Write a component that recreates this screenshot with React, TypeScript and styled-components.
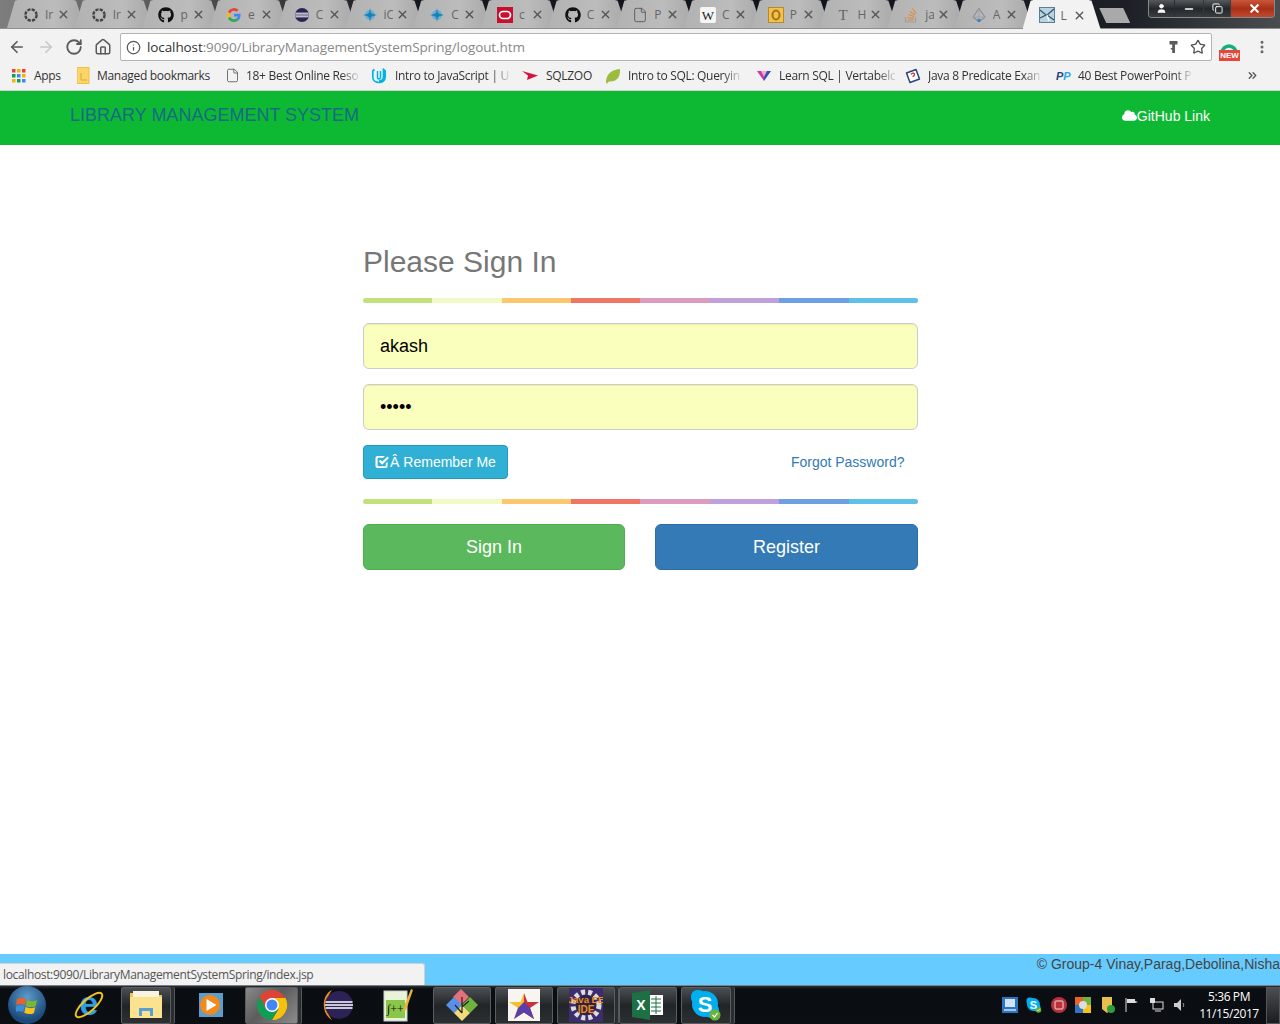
import React from "react";
import styled, { createGlobalStyle } from "styled-components";
import { ArrowLeft, ArrowRight, RotateCw, Home, Info, Star, X, Minus, Copy, User, ChevronsRight, MoreVertical, File } from "lucide-react";
import { FaGithub, FaCloud } from "react-icons/fa";

const Global = createGlobalStyle`
  html, body { margin: 0; padding: 0; background: #fff; }
  body { font-family: "Liberation Sans", Arial, sans-serif; overflow: hidden; }
  * { box-sizing: border-box; }
`;

const Page = styled.div`
  width: 1280px;
  height: 1024px;
  display: flex;
  flex-direction: column;
  position: relative;
  overflow: hidden;
`;

/* ---------- browser chrome ---------- */
const TabStrip = styled.div`
  height: 29px;
  flex: none;
  display: flex;
  justify-content: space-between;
  padding-left: 7px;
  background: linear-gradient(90deg, #7d7d7d 0, #5a5a5a 12%, #14181e 32%, #10141a 65%, #1c2026 88%, #4a4d50 100%);
  border-bottom: 1px solid #8f8f8f;
`;
const Tabs = styled.div`
  display: flex;
  align-items: flex-end;
`;
const Tab = styled.div<{ $active?: boolean }>`
  width: 78px;
  height: 28px;
  margin-right: -10.3px;
  padding: 1px 0 0 16px;
  display: flex;
  align-items: center;
  clip-path: polygon(0 100%, 8px 3%, 11px 0, 66px 0, 69px 3%, 78px 100%);
  background: ${(p) => (p.$active ? "#f2f2f2" : "linear-gradient(90deg,#b2b2b2,#bcbcbc 60%,#a8a8a8)")};
  position: relative;
  z-index: ${(p) => (p.$active ? 2 : 1)};
  ${(p) => (p.$active ? "height: 29px; margin-bottom: -1px;" : "")}
`;
const TabLabel = styled.span`
  font-family: "Open Sans", sans-serif;
  font-size: 12px;
  color: #666;
  width: 9px;
  margin-left: 6px;
  overflow: hidden;
  white-space: nowrap;
  flex: none;
`;
const TabClose = styled(X)`
  margin-left: 3px;
  flex: none;
  color: #555;
`;
const NewTab = styled.div`
  width: 31px;
  height: 15px;
  align-self: flex-start;
  margin: 8px 0 0 9px;
  background: #a9a9a9;
  clip-path: polygon(0 0, 24px 0, 31px 100%, 7px 100%);
`;
const WinControls = styled.div`
  width: 127px;
  height: 18px;
  margin-right: 5px;
  display: flex;
  gap: 1px;
  border: 1px solid #888;
  border-top: none;
  border-radius: 0 0 4px 4px;
  overflow: hidden;
`;
const WinButton = styled.div<{ $w: number; $bg?: string }>`
  width: ${(p) => p.$w}px;
  flex: none;
  display: flex;
  align-items: center;
  justify-content: center;
  color: #fff;
  background: ${(p) => p.$bg || "linear-gradient(180deg,#55585c,#24272b 50%,#3a3d40)"};
`;

const Toolbar = styled.div`
  height: 33px;
  flex: none;
  display: flex;
  align-items: center;
  background: #f2f2f2;
  padding: 3px 0 0 8px;
`;
const NavIcons = styled.div`
  display: flex;
  align-items: center;
  gap: 10.5px;
  width: 112px;
  flex: none;
  color: #5a5a5a;
`;
const Omnibox = styled.div`
  width: 1092px;
  height: 28px;
  flex: none;
  background: #fff;
  border: 1px solid #b4b4b4;
  border-radius: 2px;
  display: flex;
  align-items: center;
  padding: 0 5px;
  color: #555;
`;
const Url = styled.div`
  flex: 1;
  margin-left: 6px;
  font-family: "Open Sans", sans-serif;
  font-size: 13.5px;
  color: #888;
  white-space: nowrap;
  letter-spacing: -0.1px;
  b { font-weight: 400; color: #333; }
`;
const ExtWrap = styled.div`
  width: 62px;
  flex: none;
  margin-left: 6px;
  position: relative;
  height: 28px;
  display: flex;
  align-items: center;
  justify-content: space-between;
  padding-right: 10px;
`;
const NewBadge = styled.span`
  position: absolute;
  left: 1px;
  top: 17px;
  background: #e8453c;
  color: #fff;
  font-size: 8px;
  font-weight: 700;
  width: 21px;
  height: 11px;
  line-height: 11px;
  text-align: center;
`;

const Bookmarks = styled.div`
  height: 29px;
  flex: none;
  display: flex;
  align-items: center;
  background: #f2f2f2;
  border-bottom: 1px solid #d2d2d2;
  padding: 0 0 1px 11px;
`;
const Bookmark = styled.div<{ $w: number }>`
  width: ${(p) => p.$w}px;
  flex: none;
  display: flex;
  align-items: center;
`;
const BookmarkIcon = styled.span<{ $gap: number }>`
  display: flex;
  width: 16px;
  height: 16px;
  align-items: center;
  justify-content: center;
  flex: none;
  margin-right: ${(p) => p.$gap}px;
`;
const BookmarkText = styled.span<{ $fade?: boolean }>`
  font-family: "Open Sans", sans-serif;
  font-size: 12px;
  letter-spacing: -0.3px;
  color: #333;
  white-space: nowrap;
  ${(p) => (p.$fade ? "mask-image: linear-gradient(90deg,#000 85%,rgba(0,0,0,.15));" : "")}
`;
const Overflow = styled(ChevronsRight)`
  margin-left: auto;
  margin-right: 21px;
  color: #555;
`;

/* ---------- page ---------- */
const NavBar = styled.nav`
  height: 54px;
  flex: none;
  background: #0db933;
  display: flex;
  align-items: center;
  justify-content: space-between;
  padding: 0 70px 5px;
`;
const Brand = styled.a`
  font-size: 18px;
  color: #176a85;
  white-space: nowrap;
`;
const GitLink = styled.a`
  font-size: 14px;
  color: #fff;
  display: flex;
  align-items: center;
`;
const Main = styled.main`
  flex: 1;
  background: #fff;
  display: flex;
  justify-content: center;
  padding-top: 96px;
`;
const Form = styled.form`
  width: 555px;
  margin-left: 1px;
`;
const Heading = styled.h2`
  margin: 0;
  font-size: 30px;
  line-height: 41px;
  font-weight: 400;
  color: #777;
`;
const Rainbow = styled.div<{ $mt: number; $mb: number }>`
  height: 5px;
  margin: ${(p) => p.$mt}px 0 ${(p) => p.$mb}px;
  border-radius: 5px;
  background: linear-gradient(
    90deg,
    #c2e07c 0 12.5%, #f1f9c4 12.5% 25%, #fdc86d 25% 37.5%, #ef7664 37.5% 50%,
    #dc9cc0 50% 62.5%, #bf9fdc 62.5% 75%, #6e9fe0 75% 87.5%, #5fc1e8 87.5% 100%
  );
`;
const Field = styled.input`
  display: block;
  width: 100%;
  height: 46px;
  margin-bottom: 15px;
  padding: 0 16px;
  font-family: "Liberation Sans", Arial, sans-serif;
  font-size: 18px;
  color: #000;
  background: #fbffbd;
  border: 1px solid #ccc;
  border-radius: 6px;
  box-shadow: inset 0 1px 1px rgba(0, 0, 0, 0.075);
  outline: none;
`;
const RememberRow = styled.div`
  display: flex;
  align-items: center;
  justify-content: space-between;
  padding-right: 13.5px;
`;
const Remember = styled.button`
  width: 145px;
  height: 34px;
  padding: 0;
  display: flex;
  align-items: center;
  justify-content: center;
  font-family: "Liberation Sans", Arial, sans-serif;
  font-size: 14px;
  color: #fff;
  background: #31b0d5;
  border: 1px solid #269abc;
  border-radius: 4px;
`;
const Forgot = styled.a`
  font-size: 14px;
  color: #337ab7;
`;
const Actions = styled.div`
  display: grid;
  grid-template-columns: 262px 263px;
  column-gap: 30px;
`;
const Action = styled.button<{ $bg: string; $bd: string }>`
  height: 46px;
  font-family: "Liberation Sans", Arial, sans-serif;
  font-size: 18px;
  color: #fff;
  background: ${(p) => p.$bg};
  border: 1px solid ${(p) => p.$bd};
  border-radius: 6px;
`;

const Footer = styled.footer`
  height: 31px;
  flex: none;
  background: #66ccff;
  font-size: 14px;
  line-height: 20px;
  color: #444;
  text-align: right;
  white-space: nowrap;
`;
const StatusBubble = styled.div`
  position: absolute;
  left: 0;
  top: 963px;
  width: 425px;
  height: 22px;
  background: #f2f2f2;
  border: 1px solid #d0d0d0;
  border-left: none;
  border-bottom: none;
  border-radius: 0 3px 0 0;
  padding-left: 3px;
  font-family: "Open Sans", sans-serif;
  font-size: 12px;
  letter-spacing: -0.35px;
  line-height: 21px;
  color: #555;
`;

/* ---------- taskbar ---------- */
const Taskbar = styled.div`
  height: 39px;
  flex: none;
  display: flex;
  align-items: center;
  padding-left: 8px;
  color: #fff;
  background: linear-gradient(180deg, #2b3036 0, #0a0d11 8%, #0b0e12 100%);
  border-top: 1px solid #7a8088;
`;
const Orb = styled.div`
  width: 38px;
  height: 38px;
  flex: none;
  border-radius: 50%;
  background: radial-gradient(circle at 50% 30%, #5d9ccb, #1c4a78 70%);
  display: flex;
  align-items: center;
  justify-content: center;
`;
const TaskItem = styled.div<{ $w: number; $ml: number; $boxed?: boolean; $light?: boolean; $stack?: boolean }>`
  width: ${(p) => p.$w}px;
  height: 37px;
  margin-left: ${(p) => p.$ml}px;
  flex: none;
  display: flex;
  align-items: center;
  justify-content: center;
  border-radius: 2px;
  ${(p) => (p.$boxed ? "border: 1px solid #5a5d60;" : "")}
  ${(p) => (p.$stack ? "box-shadow: 3px 0 0 #2b2e31, 4px 0 0 #55585b;" : "")}
  background: ${(p) =>
    p.$light
      ? "linear-gradient(135deg,#8a8a8a,#5c5c5c 45%,#8c8c8c)"
      : p.$boxed
      ? "linear-gradient(180deg,#4b4e52,#222528 50%,#2d3033)"
      : "transparent"};
`;
const Tray = styled.div`
  margin-left: auto;
  display: flex;
  align-items: center;
  gap: 8.5px;
`;
const Clock = styled.div`
  width: 66px;
  margin-left: 0.5px;
  font-family: "Open Sans", sans-serif;
  font-size: 12px;
  line-height: 17px;
  letter-spacing: -0.4px;
  text-align: center;
  color: #fff;
`;
const ShowDesktop = styled.div`
  width: 14px;
  height: 37px;
  margin-left: -4.5px;
  border: 1px solid #555;
  background: linear-gradient(180deg, #4b4e52, #1a1c1f);
`;

/* ---------- drawn icons ---------- */
const Ring = () => (
  <svg width="16" height="16" viewBox="0 0 16 16">
    <circle cx="8" cy="8" r="5.6" fill="none" stroke="#444" strokeWidth="2.4" strokeDasharray="3.2 1.2" />
  </svg>
);
const GoogleG = () => (
  <svg width="16" height="16" viewBox="0 0 16 16">
    <path d="M14.5 8.2c0-.5 0-1-.1-1.4H8v2.7h3.7a3.2 3.2 0 0 1-1.4 2.1l2.2 1.7c1.3-1.2 2-3 2-5.1z" fill="#4285f4" />
    <path d="M8 15c1.9 0 3.4-.6 4.5-1.7l-2.2-1.7c-.6.4-1.4.7-2.3.7-1.8 0-3.3-1.2-3.8-2.8L1.9 11.2A7 7 0 0 0 8 15z" fill="#34a853" />
    <path d="M4.2 9.5a4 4 0 0 1 0-2.9L1.9 4.8a7 7 0 0 0 0 6.4z" fill="#fbbc05" />
    <path d="M8 3.8c1 0 1.9.4 2.6 1l2-2A7 7 0 0 0 1.9 4.8l2.3 1.8C4.7 5 6.2 3.8 8 3.8z" fill="#ea4335" />
  </svg>
);
const EclipseIcon = ({ s = 16 }: { s?: number }) => (
  <svg width={s} height={s} viewBox="0 0 16 16">
    <circle cx="8" cy="8" r="7" fill="#2c2255" />
    <path d="M1.5 6.2h13M1.2 8h13.6M1.5 9.8h13" stroke="#fff" strokeWidth="1" />
  </svg>
);
const Compass = () => (
  <svg width="16" height="16" viewBox="0 0 16 16">
    <circle cx="8" cy="8" r="5" fill="#5fb0d6" />
    <circle cx="8" cy="8" r="2.2" fill="#1a6f9e" />
    <path d="M8 1l1 5.5L15 8l-6 1.5L8 15 7 9.5 1 8l6-1.5z" fill="#1f7fb0" />
  </svg>
);
const OracleIcon = () => (
  <svg width="16" height="16" viewBox="0 0 16 16">
    <rect width="16" height="16" fill="#c8102e" />
    <rect x="2.5" y="4.5" width="11" height="7" rx="3.5" fill="none" stroke="#fff" strokeWidth="1.7" />
  </svg>
);
const WikiIcon = () => (
  <svg width="16" height="16" viewBox="0 0 16 16">
    <rect width="16" height="16" rx="2" fill="#f5f5f5" />
    <text x="8" y="12.5" textAnchor="middle" fontFamily="Liberation Serif, serif" fontSize="13" fill="#222">W</text>
  </svg>
);
const OIcon = () => (
  <svg width="16" height="16" viewBox="0 0 16 16">
    <rect x=".5" y=".5" width="15" height="15" fill="#f0c14b" stroke="#b78a2a" />
    <ellipse cx="8" cy="8" rx="3.5" ry="4.5" fill="none" stroke="#a8701a" strokeWidth="2" />
  </svg>
);
const TIcon = () => (
  <svg width="16" height="16" viewBox="0 0 16 16">
    <text x="8" y="13" textAnchor="middle" fontFamily="Liberation Serif, serif" fontSize="15" fill="#666">T</text>
  </svg>
);
const StackIcon = () => (
  <svg width="16" height="16" viewBox="0 0 16 16" fill="none">
    <path d="M2.5 10v5h10v-5" stroke="#a69f90" strokeWidth="1.2" />
    <path d="M4.5 13h6M4.7 10.500l6 .8M5.500 7.500l5.600 2M7 4.500l5 3.200M9.500 1.500l3.500 5" stroke="#e08a3a" strokeWidth="1.2" />
  </svg>
);
const NetIcon = () => (
  <svg width="16" height="16" viewBox="0 0 16 16" fill="none">
    <path d="M8 1.5L14 10 8 14.500 2 10z" stroke="#8b8f99" strokeWidth="1.2" />
    <path d="M8 1.5v13M2 10h12" stroke="#9aa0aa" strokeWidth=".8" />
    <circle cx="8" cy="13.5" r="1.8" fill="#3d86c6" />
  </svg>
);
const SpringIcon = () => (
  <svg width="16" height="16" viewBox="0 0 16 16">
    <rect x=".5" y=".5" width="15" height="15" fill="#b9d3e0" stroke="#5b7f93" />
    <path d="M1 3l6 5-6 3M15 2L8 8l7 5" fill="none" stroke="#33566b" strokeWidth="1.3" />
    <path d="M8 8l2 6" stroke="#fff" strokeWidth="1.3" />
  </svg>
);
const AppsGrid = () => (
  <svg width="14" height="14" viewBox="0 0 14 14">
    {["#e94235", "#f4b400", "#e94235", "#0f9d58", "#4285f4", "#f4b400", "#f4b400", "#0f9d58", "#4285f4"].map((c, i) => (
      <rect key={i} x={(i % 3) * 5} y={Math.floor(i / 3) * 5} width="3.5" height="3.5" fill={c} />
    ))}
  </svg>
);
const FolderIcon = () => (
  <svg width="13" height="17" viewBox="0 0 13 17">
    <rect width="12" height="16" y=".5" fill="#fbd666" stroke="#edc04d" />
    <path d="M4 6v7h6" fill="none" stroke="#d9a93a" />
  </svg>
);
const UdacityIcon = () => (
  <svg width="16" height="16" viewBox="0 0 16 16" fill="none">
    <path d="M3.5 1.5L1.8 3v6c0 3.500 3 5.500 6.200 5.500S14.200 12.500 14.200 9V3l-1.700-1.500V9c0 3-2 4-4.500 4" stroke="#02b3e4" strokeWidth="1.7" />
    <path d="M6.5 3v7c0 1.200 3 1.200 3 0V3" stroke="#02b3e4" strokeWidth="1.5" />
  </svg>
);
const SqlZoo = () => (
  <svg width="16" height="16" viewBox="0 0 16 16">
    <path d="M0 3l16 4.500L5 12l1-4.500z" fill="#d6123f" />
  </svg>
);
const Leaf = () => (
  <svg width="16" height="16" viewBox="0 0 16 16">
    <path d="M1 15C1 7 5 2 15 1c.5 8-3 13-11 12.500L2 15.500z" fill="#9cbb3f" />
  </svg>
);
const Vertabelo = () => (
  <svg width="14" height="14" viewBox="0 0 14 14">
    <path d="M0 2h7L7 12z" fill="#c43b9c" />
    <path d="M7 2h7l-7 10z" fill="#3b4bb8" />
    <path d="M4 2h6L7 8z" fill="#f3a8cf" />
  </svg>
);
const JavaPred = () => (
  <svg width="16" height="16" viewBox="0 0 16 16">
    <path d="M1.5 5L11 1.5 14.500 11 5 14.500z" fill="#fff" stroke="#27457e" strokeWidth="1.5" strokeLinejoin="round" />
    <path d="M6 6.5c1-2 4-1.500 3.500.3-.3 1-1.500 1-1.500 2.200" fill="none" stroke="#c8323c" strokeWidth="1.3" />
  </svg>
);
const PPIcon = () => (
  <svg width="16" height="12" viewBox="0 0 16 12">
    <text x="0" y="10" fontFamily="Liberation Sans, sans-serif" fontStyle="italic" fontWeight="700" fontSize="11">
      <tspan fill="#27457e">P</tspan>
      <tspan fill="#2aa9e0">P</tspan>
    </text>
  </svg>
);
const KeyIcon = () => (
  <svg width="9" height="14" viewBox="0 0 9 14">
    <path d="M.5 1h8v3.500H6V13H3.200V9.500H1.800V8h1.400V4.500H.5z" fill="#5c5c5c" />
  </svg>
);
const GrammarlyArc = () => (
  <svg width="22" height="14" viewBox="0 0 22 14" fill="none">
    <path d="M4 13a7 7 0 0 1 14 0" stroke="#15b07a" strokeWidth="3.5" />
    <path d="M9 13a2.500 2.500 0 0 1 4 0" stroke="#15b07a" strokeWidth="1.5" />
  </svg>
);
const CheckGlyph = () => (
  <svg width="15" height="14" viewBox="0 0 15 14">
    <path d="M2.5 1H10L8.2 2.800H3a.4.4 0 0 0-.4.4v7.600c0 .2.2.4.4.4h7.400c.2 0 .4-.2.4-.4V8.500l1.800-1.800V11a2 2 0 0 1-2 2H2.500a2 2 0 0 1-2-2V3a2 2 0 0 1 2-2z" fill="#fff" />
    <path d="M3.8 6.200l1.500-1.500 1.900 1.900L12.500 1.400 14 2.900 7.200 9.700z" fill="#fff" />
  </svg>
);

/* taskbar icons */
const WindowsFlag = () => (
  <svg width="22" height="20" viewBox="0 0 22 20">
    <path d="M1 4c3-1.500 6-1.500 9 .2l-1.300 6C6 8.500 3.500 8.500 0 10z" fill="#e8622a" />
    <path d="M11 5c3 1.500 6 1.500 10 .2l-1.500 6c-3 1.200-6 1.200-9.800-.3z" fill="#7cb82f" />
    <path d="M0 11c3-1.500 5.500-1.500 8.500 0l-1.300 6C4.500 15.500 2 15.500 0 17z" fill="#3a8fd8" />
    <path d="M9.5 12c3 1.500 6 1.500 9.800.2l-1.500 6c-3 1.200-6 1.200-9.500-.4z" fill="#f5c31c" />
  </svg>
);
const IEIcon = () => (
  <svg width="34" height="36" viewBox="0 0 34 36" fill="none">
    <text x="17" y="28" textAnchor="middle" fontFamily="Liberation Sans, sans-serif" fontWeight="700" fontSize="34" fill="#2c9fe6">e</text>
    <ellipse cx="17" cy="18" rx="17" ry="6" transform="rotate(-42 17 18)" stroke="#f3c21b" strokeWidth="2" />
  </svg>
);
const ExplorerIcon = () => (
  <svg width="34" height="30" viewBox="0 0 34 30">
    <path d="M1 3h12l2 2h18v23H1z" fill="#e8c860" />
    <rect x="4" y="1" width="26" height="7" fill="#f8f4e0" />
    <rect x="1" y="7" width="32" height="21" fill="#fbe28f" />
    <path d="M10 26v-8h14v8h-3v-5h-8v5z" fill="#5a9fd6" />
  </svg>
);
const PlayerIcon = () => (
  <svg width="26" height="26" viewBox="0 0 26 26">
    <rect x="1" y="1" width="24" height="24" fill="#5e9ccc" />
    <circle cx="12" cy="13" r="10" fill="#f08a1d" />
    <path d="M8.5 7l10 6-10 6z" fill="#fff" />
  </svg>
);
const ChromeIcon = () => (
  <svg width="32" height="32" viewBox="0 0 32 32">
    <circle cx="16" cy="16" r="15" fill="#db4437" />
    <path d="M16 9h13.500A15 15 0 0 1 16 31l6.500-11z" fill="#f4c20d" />
    <path d="M3.5 7.700A15 15 0 0 0 16 31l6.500-11L16 23 10 19.500z" fill="#0f9d58" />
    <circle cx="16" cy="16" r="7" fill="#fff" />
    <circle cx="16" cy="16" r="5.5" fill="#4285f4" />
  </svg>
);
const EclipseTask = () => (
  <svg width="36" height="32" viewBox="0 0 36 32">
    <path d="M13 1C3 5 1 24 13 31 6 22 6 10 13 1z" fill="#f08a1d" />
    <circle cx="20" cy="16" r="14" fill="#2c2255" />
    <path d="M6.5 13h27M6 16h28M6.500 19h27" stroke="#fff" strokeWidth="1.4" />
  </svg>
);
const NotepadIcon = () => (
  <svg width="30" height="34" viewBox="0 0 30 34">
    <rect x="1" y="3" width="23" height="30" fill="#e8f3d8" stroke="#ccc" />
    <rect x="3" y="12" width="19" height="18" fill="#8ac64a" />
    <text x="4" y="25" fontFamily="Liberation Serif, serif" fontSize="12" fill="#111">∫++</text>
    <path d="M28 1l2 1-7 20-3 2 .5-4z" fill="#e8b632" />
  </svg>
);
const GitKraken = () => (
  <svg width="34" height="34" viewBox="0 0 34 34">
    <path d="M17 1l8 8-8 8-8-8z" fill="#e5707c" transform="translate(-1 0)" />
    <path d="M9 9l8 8-8 8-8-8z" fill="#5a8fe8" />
    <path d="M25 9l8 8-8 8-8-8z" fill="#6fb23c" />
    <path d="M17 17l8 8-8 8-8-8z" fill="#f0dc78" />
    <path d="M17 9v16M10 17l7 8M24 13l-7 6" stroke="#222" strokeWidth="1.2" />
  </svg>
);
const StarIcon = () => (
  <svg width="32" height="32" viewBox="0 0 32 32">
    <rect width="32" height="32" fill="#f8f4f0" />
    <path d="M16 4l3.500 9H31l-9 6 4 11-10-6.500z" fill="#c8323c" />
    <path d="M16 4l-3.500 9H1l9 6-4 11 10-6.500z" fill="#f5c02c" />
    <path d="M10 19l6-6 6 6 4 11-10-6.500L6 30z" fill="#5a3fa8" />
  </svg>
);
const JavaEE = () => (
  <svg width="34" height="34" viewBox="0 0 34 34">
    <rect width="34" height="34" fill="#3d2c6e" />
    <circle cx="17" cy="17" r="13" fill="none" stroke="#ddd" strokeWidth="5" strokeDasharray="4 3" />
    <circle cx="17" cy="17" r="10" fill="#2c2440" />
    <text x="17" y="15" textAnchor="middle" fontFamily="Liberation Sans, sans-serif" fontWeight="700" fontSize="9.5" fill="#f58a1f">Java EE</text>
    <text x="17" y="25" textAnchor="middle" fontFamily="Liberation Sans, sans-serif" fontWeight="700" fontSize="10" fill="#f58a1f">IDE</text>
  </svg>
);
const ExcelIcon = () => (
  <svg width="32" height="32" viewBox="0 0 32 32">
    <rect x="17" y="6" width="14" height="20" fill="#fff" />
    <path d="M19 10h10M19 14h10M19 18h10M19 22h10M24 7v18" stroke="#1d7044" />
    <path d="M0 4l18-3v30L0 28z" fill="#1d7044" />
    <text x="9" y="21" textAnchor="middle" fontFamily="Liberation Sans, sans-serif" fontWeight="700" fontSize="14" fill="#fff">X</text>
  </svg>
);
const SkypeIcon = ({ s = 32 }: { s?: number }) => (
  <svg width={s} height={s} viewBox="0 0 32 32">
    <circle cx="15" cy="15" r="13" fill="#00aff0" />
    <rect x="1" y="1" width="14" height="14" rx="6" fill="#00aff0" />
    <rect x="15" y="15" width="14" height="14" rx="6" fill="#00aff0" />
    <text x="15" y="23" textAnchor="middle" fontFamily="Liberation Sans, sans-serif" fontWeight="700" fontSize="22" fill="#fff">S</text>
    <circle cx="25" cy="26" r="5.5" fill="#6cb33e" />
    <path d="M22.5 26l2 2 3-4" fill="none" stroke="#fff" strokeWidth="1.2" />
  </svg>
);
const TrayExchange = () => (
  <svg width="16" height="16" viewBox="0 0 16 16">
    <rect width="16" height="16" fill="#2e74c0" />
    <rect x="3" y="2" width="10" height="8" fill="#cfe4f7" />
    <path d="M2 13h12" stroke="#9cc6ec" strokeWidth="2" />
  </svg>
);
const TrayRed = () => (
  <svg width="16" height="16" viewBox="0 0 16 16">
    <circle cx="8" cy="8" r="8" fill="#b8303c" />
    <rect x="4" y="4" width="8" height="8" rx="1" fill="none" stroke="#f5d8dc" />
  </svg>
);
const TrayC = () => (
  <svg width="16" height="16" viewBox="0 0 16 16">
    <rect width="8" height="8" fill="#e8622a" />
    <rect x="8" width="8" height="8" fill="#6fb23c" />
    <rect y="8" width="8" height="8" fill="#2e74c0" />
    <rect x="8" y="8" width="8" height="8" fill="#f5c31c" />
    <circle cx="8" cy="8" r="4" fill="#ddd" />
  </svg>
);
const TrayShield = () => (
  <svg width="16" height="16" viewBox="0 0 16 16">
    <path d="M2 0h10v12l-5 4-5-4z" fill="#e8c050" />
    <circle cx="11" cy="12" r="4" fill="#2e9e3c" />
  </svg>
);
const TrayFlag = () => (
  <svg width="16" height="16" viewBox="0 0 16 16">
    <path d="M2 1v14" stroke="#ddd" />
    <path d="M3 2h8v2l3 1-3 1H3z" fill="#ddd" />
  </svg>
);
const TrayNet = () => (
  <svg width="16" height="16" viewBox="0 0 16 16" fill="none">
    <rect x="4" y="5" width="10" height="7" stroke="#ddd" />
    <rect x="1" y="1" width="5" height="5" fill="#ddd" />
    <path d="M6 14h6" stroke="#ddd" />
  </svg>
);
const TraySound = () => (
  <svg width="14" height="16" viewBox="0 0 14 16">
    <path d="M1 6h3l4-4v12l-4-4H1z" fill="#ccc" />
    <path d="M10 6c1 1 1 3 0 4" stroke="#999" fill="none" />
  </svg>
);

const tabs: { icon: React.ReactNode; label: string; active?: boolean }[] = [
  { icon: <Ring />, label: "Ir" },
  { icon: <Ring />, label: "Ir" },
  { icon: <FaGithub size={16} color="#111" />, label: "p" },
  { icon: <GoogleG />, label: "e" },
  { icon: <EclipseIcon />, label: "C" },
  { icon: <Compass />, label: "iC" },
  { icon: <Compass />, label: "C" },
  { icon: <OracleIcon />, label: "c" },
  { icon: <FaGithub size={16} color="#111" />, label: "C" },
  { icon: <File size={16} color="#555" strokeWidth={1.3} />, label: "P" },
  { icon: <WikiIcon />, label: "C" },
  { icon: <OIcon />, label: "P" },
  { icon: <TIcon />, label: "H" },
  { icon: <StackIcon />, label: "ja" },
  { icon: <NetIcon />, label: "A" },
  { icon: <SpringIcon />, label: "L", active: true },
];

const bookmarks: { icon: React.ReactNode; text: string; w: number; gap: number; fade?: boolean }[] = [
  { icon: <AppsGrid />, text: "Apps", w: 64, gap: 7 },
  { icon: <FolderIcon />, text: "Managed bookmarks", w: 149, gap: 6 },
  { icon: <File size={15} color="#555" strokeWidth={1.3} />, text: "18+ Best Online Reso", w: 147, gap: 6, fade: true },
  { icon: <UdacityIcon />, text: "Intro to JavaScript | U", w: 151, gap: 8, fade: true },
  { icon: <SqlZoo />, text: "SQLZOO", w: 83, gap: 8 },
  { icon: <Leaf />, text: "Intro to SQL: Queryin", w: 151, gap: 7, fade: true },
  { icon: <Vertabelo />, text: "Learn SQL | Vertabelc", w: 149, gap: 7, fade: true },
  { icon: <JavaPred />, text: "Java 8 Predicate Exan", w: 151, gap: 7, fade: true },
  { icon: <PPIcon />, text: "40 Best PowerPoint P", w: 135, gap: 6, fade: true },
];

const apps: { icon: React.ReactNode; w: number; ml: number; boxed?: boolean; light?: boolean; stack?: boolean }[] = [
  { icon: <IEIcon />, w: 36, ml: 25 },
  { icon: <ExplorerIcon />, w: 50, ml: 14, boxed: true, stack: true },
  { icon: <PlayerIcon />, w: 44, ml: 18 },
  { icon: <ChromeIcon />, w: 53, ml: 12, boxed: true, light: true, stack: true },
  { icon: <EclipseTask />, w: 40, ml: 19 },
  { icon: <NotepadIcon />, w: 36, ml: 23 },
  { icon: <GitKraken />, w: 58, ml: 17, boxed: true },
  { icon: <StarIcon />, w: 58, ml: 4, boxed: true },
  { icon: <JavaEE />, w: 58, ml: 4, boxed: true, stack: true },
  { icon: <ExcelIcon />, w: 58, ml: 4, boxed: true },
  { icon: <SkypeIcon />, w: 50, ml: 4, boxed: true, stack: true },
];

export default function App() {
  return (
    <Page>
      <Global />
      <TabStrip>
        <Tabs>
          {tabs.map((t, i) => (
            <Tab key={i} $active={t.active}>
              {t.icon}
              <TabLabel>{t.label}</TabLabel>
              <TabClose size={13} strokeWidth={2.5} />
            </Tab>
          ))}
          <NewTab />
        </Tabs>
        <WinControls>
          <WinButton $w={25}><User size={11} fill="#fff" /></WinButton>
          <WinButton $w={28}><Minus size={12} strokeWidth={3} /></WinButton>
          <WinButton $w={26}><Copy size={11} strokeWidth={2} /></WinButton>
          <WinButton $w={46} $bg="linear-gradient(180deg,#c9563a,#a83018 50%,#c0492e)"><X size={13} strokeWidth={4} /></WinButton>
        </WinControls>
      </TabStrip>

      <Toolbar>
        <NavIcons>
          <ArrowLeft size={18} strokeWidth={2.2} />
          <ArrowRight size={18} strokeWidth={2.2} color="#c8c8c8" />
          <RotateCw size={18} strokeWidth={2.4} />
          <Home size={18} strokeWidth={2} />
        </NavIcons>
        <Omnibox>
          <Info size={15} strokeWidth={2} />
          <Url><b>localhost</b>:9090/LibraryManagementSystemSpring/logout.htm</Url>
          <KeyIcon />
          <Star size={16} strokeWidth={2} style={{ marginLeft: 12 }} />
        </Omnibox>
        <ExtWrap>
          <GrammarlyArc />
          <NewBadge>NEW</NewBadge>
          <MoreVertical size={16} strokeWidth={2.5} color="#666" />
        </ExtWrap>
      </Toolbar>

      <Bookmarks>
        {bookmarks.map((b, i) => (
          <Bookmark key={i} $w={b.w}>
            <BookmarkIcon $gap={b.gap}>{b.icon}</BookmarkIcon>
            <BookmarkText $fade={b.fade}>{b.text}</BookmarkText>
          </Bookmark>
        ))}
        <Overflow size={13} strokeWidth={2.5} />
      </Bookmarks>

      <NavBar>
        <Brand>LIBRARY MANAGEMENT SYSTEM</Brand>
        <GitLink><FaCloud size={15} color="#fff" />GitHub Link</GitLink>
      </NavBar>

      <Main>
        <Form>
          <Heading>Please Sign In</Heading>
          <Rainbow $mt={16} $mb={20} />
          <Field type="text" defaultValue="akash" readOnly />
          <Field type="password" defaultValue="abcde" readOnly />
          <RememberRow>
            <Remember type="button"><CheckGlyph />Â Remember Me</Remember>
            <Forgot>Forgot Password?</Forgot>
          </RememberRow>
          <Rainbow $mt={20} $mb={20} />
          <Actions>
            <Action type="button" $bg="#5cb85c" $bd="#4cae4c">Sign In</Action>
            <Action type="button" $bg="#337ab7" $bd="#2e6da4">Register</Action>
          </Actions>
        </Form>
      </Main>

      <Footer>© Group-4 Vinay,Parag,Debolina,Nisha</Footer>
      <StatusBubble>localhost:9090/LibraryManagementSystemSpring/index.jsp</StatusBubble>

      <Taskbar>
        <Orb><WindowsFlag /></Orb>
        {apps.map((a, i) => (
          <TaskItem key={i} $w={a.w} $ml={a.ml} $boxed={a.boxed} $light={a.light} $stack={a.stack}>{a.icon}</TaskItem>
        ))}
        <Tray>
          <TrayExchange />
          <SkypeIcon s={16} />
          <TrayRed />
          <TrayC />
          <TrayShield />
          <TrayFlag />
          <TrayNet />
          <TraySound />
          <Clock>5:36 PM<br />11/15/2017</Clock>
          <ShowDesktop />
        </Tray>
      </Taskbar>
    </Page>
  );
}
